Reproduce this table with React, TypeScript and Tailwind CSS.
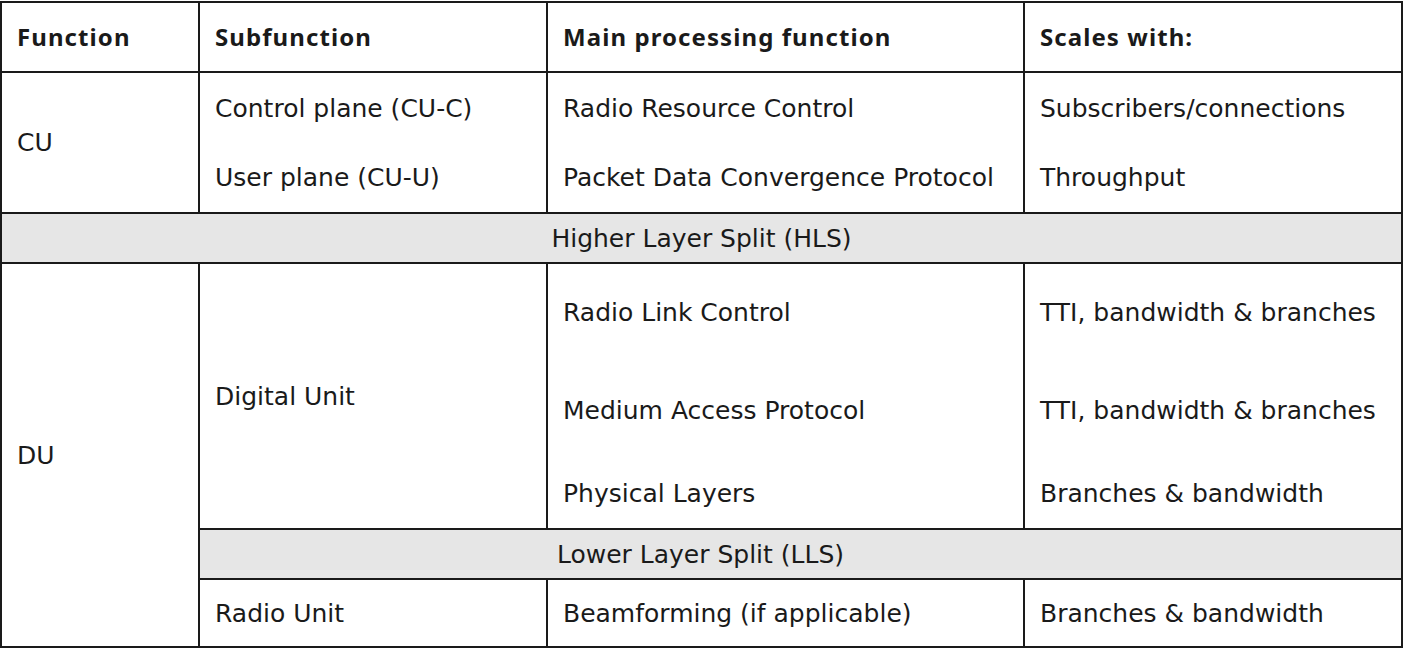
const cell = "border-2 border-[#1a1a1a] pl-[15px] pr-1 align-middle";
const band = "border-2 border-[#1a1a1a] align-middle text-center";

export default function App() {
  return (
    <div className="min-h-screen bg-white text-[#1a1a1a] font-['DejaVu_Sans',sans-serif] text-[25px] leading-none">
      <table className="table-fixed border-collapse w-[1401px] mt-px">
        <colgroup>
          <col className="w-[198px]" />
          <col className="w-[348px]" />
          <col className="w-[477px]" />
          <col className="w-[378px]" />
        </colgroup>
        <thead>
          <tr className="h-[70px] font-['Noto_Sans',sans-serif] font-semibold text-[24px] tracking-[0.045em] text-left">
            <th className={cell}>Function</th>
            <th className={cell}>Subfunction</th>
            <th className={cell}>Main processing function</th>
            <th className={cell}>Scales with:</th>
          </tr>
        </thead>
        <tbody>
          <tr className="h-[71px]">
            <td rowSpan={2} className={cell}>CU</td>
            <td className={cell + " border-b-0"}>Control plane (CU-C)</td>
            <td className={cell + " border-b-0"}>Radio Resource Control</td>
            <td className={cell + " border-b-0"}>Subscribers/connections</td>
          </tr>
          <tr className="h-[70px]">
            <td className={cell + " border-t-0"}>User plane (CU-U)</td>
            <td className={cell + " border-t-0"}>Packet Data Convergence Protocol</td>
            <td className={cell + " border-t-0"}>Throughput</td>
          </tr>
          <tr className="h-[50px] bg-[#e6e6e6]">
            <td colSpan={4} className={band + " px-0"}>Higher Layer Split (HLS)</td>
          </tr>
          <tr className="h-[98px]">
            <td rowSpan={5} className={cell}>DU</td>
            <td rowSpan={3} className={cell}>Digital Unit</td>
            <td className={cell + " border-b-0"}>Radio Link Control</td>
            <td className={cell + " border-b-0"}>TTI, bandwidth &amp; branches</td>
          </tr>
          <tr className="h-[98px]">
            <td className={cell + " border-y-0"}>Medium Access Protocol</td>
            <td className={cell + " border-y-0"}>TTI, bandwidth &amp; branches</td>
          </tr>
          <tr className="h-[70px]">
            <td className={cell + " border-t-0"}>Physical Layers</td>
            <td className={cell + " border-t-0"}>Branches &amp; bandwidth</td>
          </tr>
          <tr className="h-[50px] bg-[#e6e6e6]">
            <td colSpan={3} className={band + " pl-0 pr-[200px]"}>Lower Layer Split (LLS)</td>
          </tr>
          <tr className="h-[68px]">
            <td className={cell}>Radio Unit</td>
            <td className={cell}>Beamforming (if applicable)</td>
            <td className={cell}>Branches &amp; bandwidth</td>
          </tr>
        </tbody>
      </table>
    </div>
  );
}
